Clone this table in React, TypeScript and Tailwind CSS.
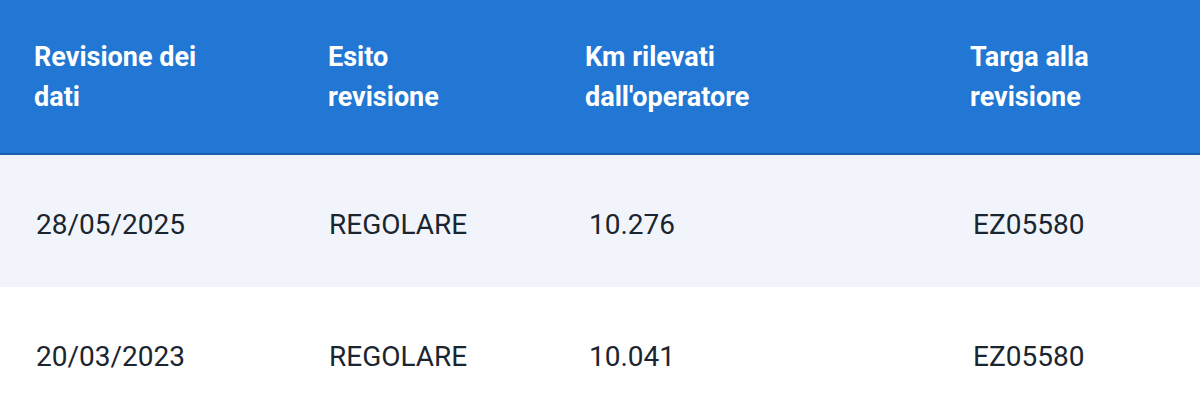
const ROWS = [
  { date: '28/05/2025', esito: 'REGOLARE', km: '10.276', targa: 'EZ05580' },
  { date: '20/03/2023', esito: 'REGOLARE', km: '10.041', targa: 'EZ05580' },
]

const COLS = 'grid grid-cols-[294px_257px_385px_1fr]'

export default function App() {
  return (
    <main className="min-h-screen w-[1200px] overflow-hidden bg-white font-['Roboto',sans-serif]">
      <div className={`${COLS} h-[155px] items-center border-b-2 border-[#1a5fae] bg-[#2177d3] text-[27px] leading-[40px] font-bold text-white`}>
        <div className="pl-[34px]">
          Revisione dei
          <br />
          dati
        </div>
        <div className="pl-[34px]">
          Esito
          <br />
          revisione
        </div>
        <div className="pl-[34px]">
          Km rilevati
          <br />
          dall'operatore
        </div>
        <div className="pl-[34px]">
          Targa alla
          <br />
          revisione
        </div>
      </div>

      {ROWS.map((row, i) => (
        <div
          key={row.date}
          className={`${COLS} h-[132px] items-center pt-2 text-[28px] text-[#1b2530] ${
            i % 2 === 0 ? 'bg-[#f1f5fb]' : 'bg-white'
          }`}
        >
          <div className="pl-[36px]">{row.date}</div>
          <div className="pl-[35px]">{row.esito}</div>
          <div className="pl-[38px]">{row.km}</div>
          <div className="pl-[37px]">{row.targa}</div>
        </div>
      ))}
    </main>
  )
}
